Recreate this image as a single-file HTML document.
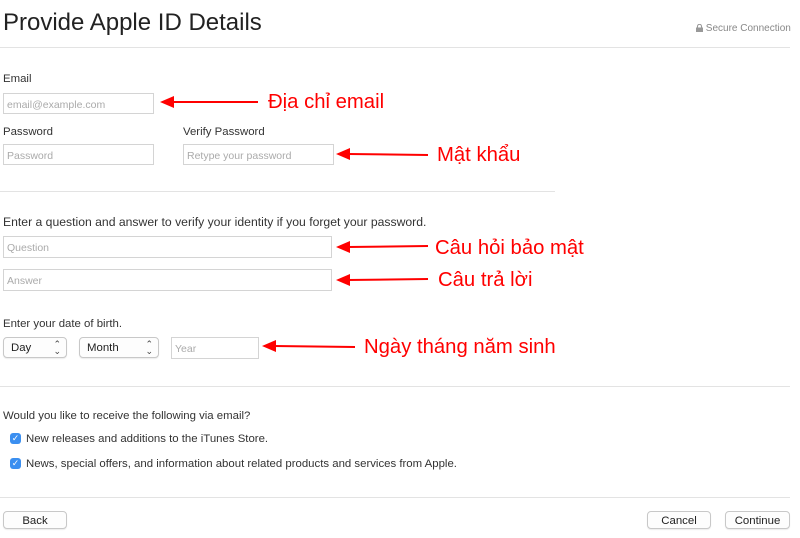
<!DOCTYPE html>
<html><head><meta charset="utf-8"><style>
body{margin:0;width:800px;height:538px;background:#fff;position:relative;overflow:hidden;font-family:"Liberation Sans",Arial,sans-serif;color:#333}
.a{position:absolute;white-space:nowrap}
.l{font-size:11.4px;color:#333}
.in{position:absolute;border:1px solid #d4d4d4;box-sizing:border-box;font-size:10.5px;color:#aaa;padding:2px 0 0 3px;display:flex;align-items:center;background:#fff}
.hr{position:absolute;height:1px;background:#e3e3e3;left:0}
.btn{position:absolute;border:1px solid #c8c8c8;border-radius:4px;box-sizing:border-box;font-size:11.4px;color:#222;display:flex;align-items:center;justify-content:center;background:#fdfdfd;box-shadow:0 1px 1px rgba(0,0,0,.08);padding-top:1px}
.sel{position:absolute;border:1px solid #c8c8c8;border-radius:4px;box-sizing:border-box;font-size:11.4px;color:#222;display:flex;align-items:center;padding:1px 0 0 7px;background:#fdfdfd;box-shadow:0 1px 1px rgba(0,0,0,.08)}
.sel span{position:absolute;right:5px;top:3px;font-size:9px;line-height:7px;color:#444;text-align:center}
.cb{position:absolute;width:11px;height:11px;border-radius:3px;background:#3b8ff0;color:#fff;font-size:9px;line-height:11px;text-align:center}
.r{position:absolute;color:#f00;font-size:20.3px;white-space:nowrap}
</style></head><body>
<div class="a" style="left:3px;top:9px;font-size:24px;color:#222;font-weight:300">Provide Apple ID Details</div>
<div class="a" style="left:696px;top:23px;font-size:10px;color:#888"><svg width="7" height="8" viewBox="0 0 7 8" style="vertical-align:-1px"><rect x="0" y="3.5" width="7" height="4.5" fill="#999"/><path d="M1.5 3.5V2.3a2 2 0 0 1 4 0v1.2" stroke="#999" fill="none" stroke-width="1.1"/></svg> Secure Connection</div>
<div class="hr" style="top:47px;width:790px"></div>
<div class="a l" style="left:3px;top:73px">Email</div>
<div class="in" style="left:3px;top:93px;width:151px;height:21px">email@example.com</div>
<div class="a l" style="left:3px;top:126px">Password</div>
<div class="in" style="left:3px;top:144px;width:151px;height:21px">Password</div>
<div class="a l" style="left:183px;top:126px">Verify Password</div>
<div class="in" style="left:183px;top:144px;width:151px;height:21px">Retype your password</div>
<div class="hr" style="top:191px;width:555px"></div>
<div class="a" style="left:3px;top:215px;font-size:12.2px">Enter a question and answer to verify your identity if you forget your password.</div>
<div class="in" style="left:3px;top:236px;width:329px;height:22px">Question</div>
<div class="in" style="left:3px;top:269px;width:329px;height:22px">Answer</div>
<div class="a l" style="left:3px;top:318px">Enter your date of birth.</div>
<div class="sel" style="left:3px;top:337px;width:64px;height:21px">Day<span>⌃<br>⌄</span></div>
<div class="sel" style="left:79px;top:337px;width:80px;height:21px">Month<span>⌃<br>⌄</span></div>
<div class="in" style="left:171px;top:337px;width:88px;height:22px">Year</div>
<div class="hr" style="top:386px;width:790px"></div>
<div class="a l" style="left:3px;top:410px">Would you like to receive the following via email?</div>
<div class="cb" style="left:10px;top:433px">✓</div>
<div class="a l" style="left:26px;top:433px">New releases and additions to the iTunes Store.</div>
<div class="cb" style="left:10px;top:458px">✓</div>
<div class="a l" style="left:26px;top:458px">News, special offers, and information about related products and services from Apple.</div>
<div class="hr" style="top:497px;width:790px"></div>
<div class="btn" style="left:3px;top:511px;width:64px;height:18px">Back</div>
<div class="btn" style="left:647px;top:511px;width:64px;height:18px">Cancel</div>
<div class="btn" style="left:725px;top:511px;width:65px;height:18px">Continue</div>
<svg class="a" style="left:0;top:0" width="800" height="538">
<g stroke="#f00" stroke-width="2">
<line x1="258" y1="102" x2="172" y2="102"/><path d="M160 102l14-6v12z" fill="#f00" stroke="none"/>
<line x1="428" y1="155" x2="348" y2="154"/><path d="M336 154l14-6v12z" fill="#f00" stroke="none"/>
<line x1="428" y1="246" x2="348" y2="247"/><path d="M336 247l14-6v12z" fill="#f00" stroke="none"/>
<line x1="428" y1="279" x2="348" y2="280"/><path d="M336 280l14-6v12z" fill="#f00" stroke="none"/>
<line x1="355" y1="347" x2="274" y2="346"/><path d="M262 346l14-6v12z" fill="#f00" stroke="none"/>
</g></svg>
<div class="r" style="left:268px;top:91px">Địa chỉ email</div>
<div class="r" style="left:437px;top:144px">Mật khẩu</div>
<div class="r" style="left:435px;top:237px">Câu hỏi bảo mật</div>
<div class="r" style="left:438px;top:269px">Câu trả lời</div>
<div class="r" style="left:364px;top:336px">Ngày tháng năm sinh</div>
</body></html>
